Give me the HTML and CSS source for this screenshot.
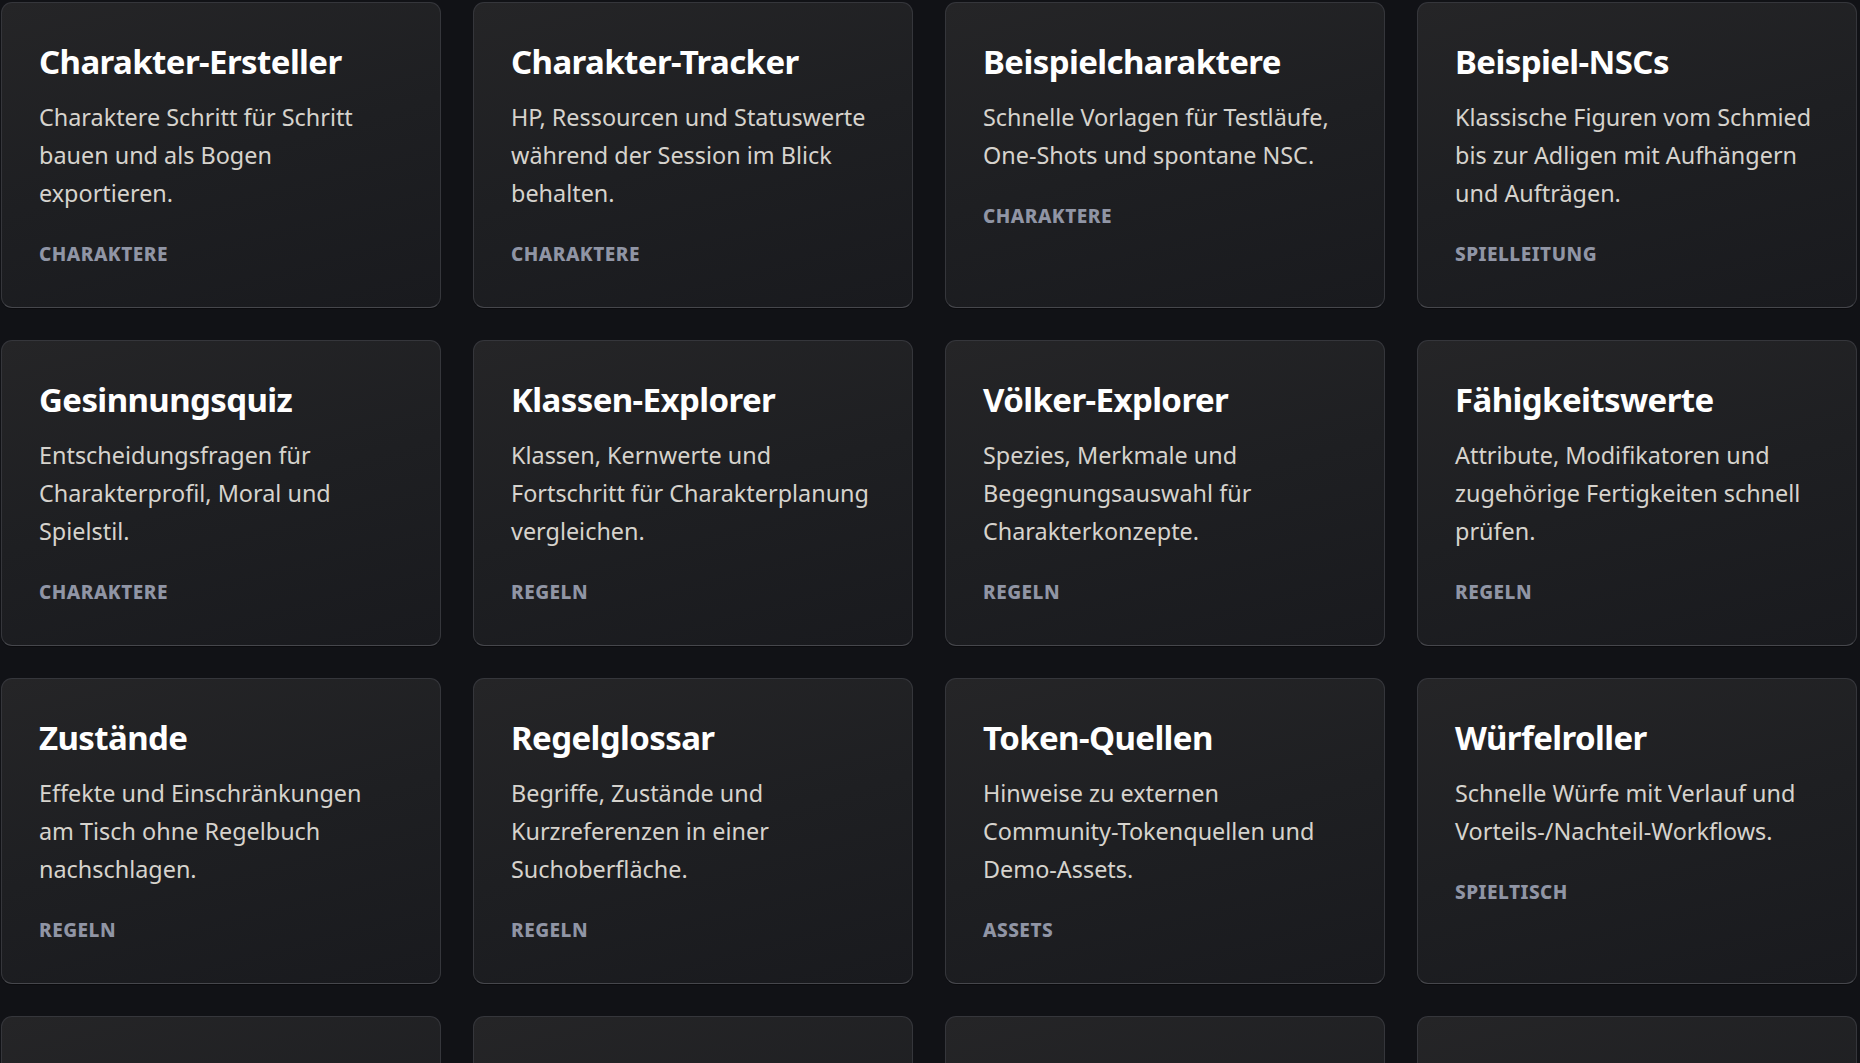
FILE: index.html
```html
<!DOCTYPE html>
<html lang="de">
<head>
<meta charset="utf-8">
<title>Werkzeuge</title>
<link rel="stylesheet" href="styles.css">
</head>
<body>
<main class="tools">
  <a class="card" href="#">
    <h2 class="card-title">Charakter-Ersteller</h2>
    <p class="card-text">Charaktere Schritt für Schritt bauen und als Bogen exportieren.</p>
    <span class="card-tag">Charaktere</span>
  </a>
  <a class="card" href="#">
    <h2 class="card-title">Charakter-Tracker</h2>
    <p class="card-text">HP, Ressourcen und Statuswerte während der Session im Blick behalten.</p>
    <span class="card-tag">Charaktere</span>
  </a>
  <a class="card" href="#">
    <h2 class="card-title">Beispielcharaktere</h2>
    <p class="card-text">Schnelle Vorlagen für Testläufe, One-Shots und spontane NSC.</p>
    <span class="card-tag">Charaktere</span>
  </a>
  <a class="card" href="#">
    <h2 class="card-title">Beispiel-NSCs</h2>
    <p class="card-text">Klassische Figuren vom Schmied bis zur Adligen mit Aufhängern und Aufträgen.</p>
    <span class="card-tag">Spielleitung</span>
  </a>

  <a class="card" href="#">
    <h2 class="card-title">Gesinnungsquiz</h2>
    <p class="card-text">Entscheidungsfragen für Charakterprofil, Moral und Spielstil.</p>
    <span class="card-tag">Charaktere</span>
  </a>
  <a class="card" href="#">
    <h2 class="card-title">Klassen-Explorer</h2>
    <p class="card-text">Klassen, Kernwerte und Fortschritt für Charakterplanung vergleichen.</p>
    <span class="card-tag">Regeln</span>
  </a>
  <a class="card" href="#">
    <h2 class="card-title">Völker-Explorer</h2>
    <p class="card-text">Spezies, Merkmale und Begegnungsauswahl für Charakterkonzepte.</p>
    <span class="card-tag">Regeln</span>
  </a>
  <a class="card" href="#">
    <h2 class="card-title">Fähigkeitswerte</h2>
    <p class="card-text">Attribute, Modifikatoren und zugehörige Fertigkeiten schnell prüfen.</p>
    <span class="card-tag">Regeln</span>
  </a>

  <a class="card" href="#">
    <h2 class="card-title">Zustände</h2>
    <p class="card-text">Effekte und Einschränkungen am Tisch ohne Regelbuch nachschlagen.</p>
    <span class="card-tag">Regeln</span>
  </a>
  <a class="card" href="#">
    <h2 class="card-title">Regelglossar</h2>
    <p class="card-text">Begriffe, Zustände und Kurzreferenzen in einer Suchoberfläche.</p>
    <span class="card-tag">Regeln</span>
  </a>
  <a class="card" href="#">
    <h2 class="card-title">Token-Quellen</h2>
    <p class="card-text">Hinweise zu externen <span class="nowrap">Community-Tokenquellen</span> und Demo-Assets.</p>
    <span class="card-tag">Assets</span>
  </a>
  <a class="card" href="#">
    <h2 class="card-title">Würfelroller</h2>
    <p class="card-text">Schnelle Würfe mit Verlauf und <span class="nowrap">Vorteils-/Nachteil-Workflows.</span></p>
    <span class="card-tag">Spieltisch</span>
  </a>

  <div class="card card-empty"></div>
  <div class="card card-empty"></div>
  <div class="card card-empty"></div>
  <div class="card card-empty"></div>
</main>
</body>
</html>
```
FILE: styles.css
```css
html, body {
  margin: 0;
  padding: 0;
  background: #111216;
  overflow: hidden;
}

body {
  font-family: "Noto Sans", "Open Sans", sans-serif;
  color: #d6d3cd;
}

.tools {
  display: grid;
  grid-template-columns: repeat(4, 440px);
  column-gap: 32px;
  row-gap: 32px;
  padding: 2px 0 0 1px;
  align-items: start;
}

.card {
  display: flex;
  flex-direction: column;
  align-items: flex-start;
  box-sizing: border-box;
  height: 306px;
  padding: 37px 39px 42px 37px;
  border: 1px solid #35363b;
  border-bottom-color: #46474c;
  border-radius: 11px;
  background: linear-gradient(165deg, #252527 0%, #1e1f22 50%, #191a1e 100%);
  box-shadow: 0 1px 0 rgba(0, 0, 0, 0.35);
  text-decoration: none;
}

.card-title {
  margin: 0;
  font-size: 33px;
  line-height: 44px;
  font-weight: 700;
  letter-spacing: -0.6px;
  color: #ffffff;
}

.card-text {
  margin: 14px 0 0;
  font-size: 23.4px;
  line-height: 38px;
  color: #d6d3cd;
}

.card-tag {
  margin-top: 31px;
  font-size: 19px;
  line-height: 22px;
  font-weight: 800;
  letter-spacing: 0.5px;
  text-transform: uppercase;
  color: #9095a5;
}

.nowrap {
  white-space: nowrap;
}
```
